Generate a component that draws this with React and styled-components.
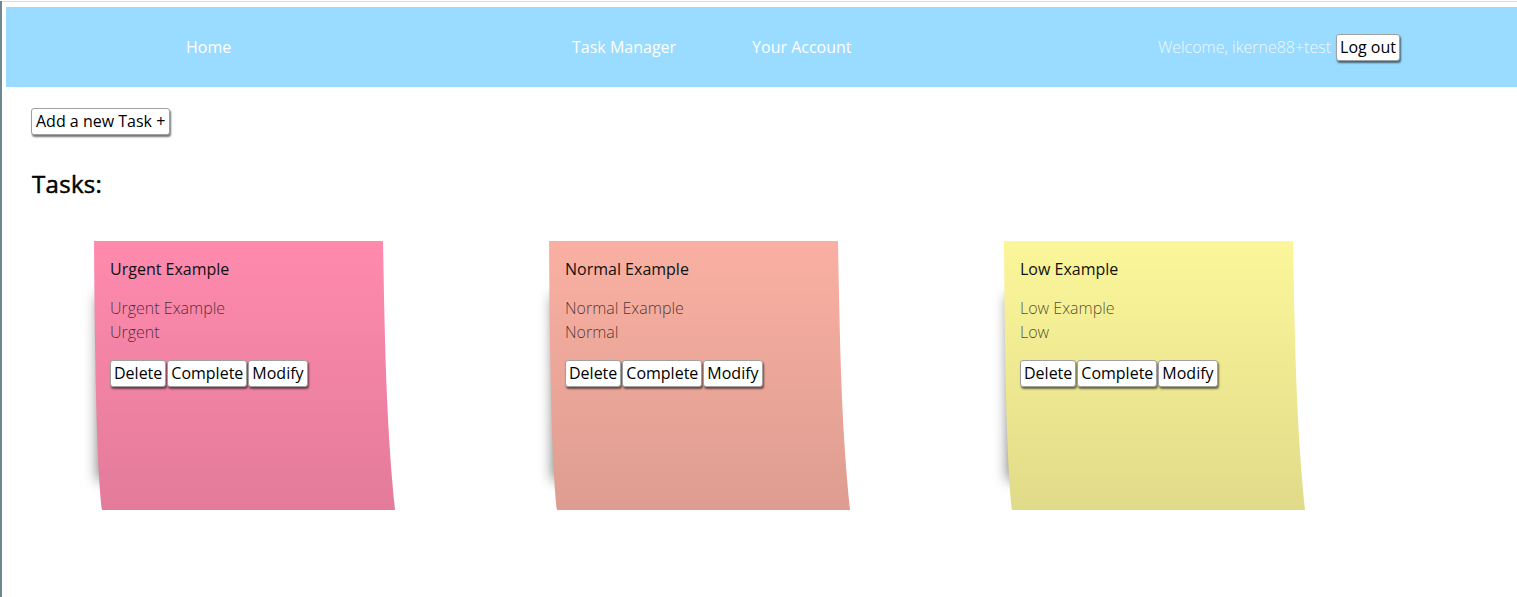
import React from "react";
import styled, { createGlobalStyle } from "styled-components";

const GlobalStyle = createGlobalStyle`
  html, body {
    margin: 0;
    padding: 0;
    background: #fff;
  }
  body {
    font-family: "Open Sans", "Liberation Sans", sans-serif;
    font-size: 16px;
    color: #000;
  }
`;

const tasks = [
  { title: "Urgent Example", description: "Urgent Example", priority: "Urgent", color: "#ff8aae" },
  { title: "Normal Example", description: "Normal Example", priority: "Normal", color: "#f9b0a2" },
  { title: "Low Example", description: "Low Example", priority: "Low", color: "#fcf69a" }
];

const App = () => {
  return (
    <Page>
      <GlobalStyle />
      <TopLine />
      <NavBar>
        <NavLeft>
          <NavLink>Home</NavLink>
        </NavLeft>
        <NavCenter>
          <NavLink>Task Manager</NavLink>
          <NavLink>Your Account</NavLink>
        </NavCenter>
        <NavRight>
          <Welcome>Welcome, ikerne88+test</Welcome>
          <Button>Log out</Button>
        </NavRight>
      </NavBar>

      <Main>
        <Button wide>Add a new Task +</Button>
        <Heading>Tasks:</Heading>
        <NoteRow>
          {tasks.map(task => (
            <NoteWrap key={task.title}>
              <NoteShadow />
              <Note color={task.color}>
                <NoteTitle>{task.title}</NoteTitle>
                <NoteText>
                  {task.description}
                  <br />
                  {task.priority}
                </NoteText>
                <NoteActions>
                  <Button>Delete</Button>
                  <Button>Complete</Button>
                  <Button>Modify</Button>
                </NoteActions>
              </Note>
            </NoteWrap>
          ))}
        </NoteRow>
      </Main>
    </Page>
  );
};

const Page = styled.div`
  min-height: 597px;
  border-left: 2px solid #71878f;
  box-sizing: border-box;
`;

const TopLine = styled.div`
  height: 1px;
  margin-top: 1px;
  background: #d9d9d9;
`;

const NavBar = styled.nav`
  display: grid;
  grid-template-columns: 560px 1fr auto;
  align-items: center;
  height: 80px;
  margin: 5px 0 0 4px;
  padding-right: 117px;
  background: #9adcff;
`;

const NavLeft = styled.div`
  padding-left: 180px;
`;

const NavCenter = styled.div`
  display: flex;
  gap: 76px;
  padding-left: 6px;
`;

const NavRight = styled.div`
  display: flex;
  align-items: center;
  gap: 5px;
`;

const NavLink = styled.a`
  color: #fff;
  font-size: 16px;
  cursor: pointer;
`;

const Welcome = styled.span`
  color: #eef8ff;
  font-weight: 300;
`;

const Button = styled.button`
  font-family: "Open Sans", "Liberation Sans", sans-serif;
  font-size: 16px;
  line-height: 22px;
  color: #000;
  background: #fff;
  border: 1px solid #a0a0a0;
  border-radius: 3px;
  padding: 1px ${props => (props.wide ? "4px" : "3px")} 2px;
  box-shadow: 1px 2px 2px rgba(0, 0, 0, 0.55);
  cursor: pointer;
`;

const Main = styled.main`
  padding: 21px 29px 0;
  display: flex;
  flex-direction: column;
  align-items: flex-start;
`;

const Heading = styled.h2`
  font-size: 24px;
  font-weight: 400;
  letter-spacing: 0.3px;
  -webkit-text-stroke: 0.5px #000;
  line-height: 32px;
  margin: 33px 0 0 1px;
`;

const NoteRow = styled.div`
  display: flex;
  gap: 154px;
  margin-top: 41px;
  padding-left: 63px;
`;

const NoteWrap = styled.div`
  position: relative;
  width: 301px;
  height: 269px;
`;

const NoteShadow = styled.div`
  position: absolute;
  left: 4px;
  top: 55px;
  bottom: 30px;
  width: 30px;
  background: rgba(0, 0, 0, 0.55);
  filter: blur(7px);
`;

const Note = styled.div`
  position: relative;
  box-sizing: border-box;
  height: 100%;
  padding: 16px 16px 0;
  background: linear-gradient(180deg, rgba(0, 0, 0, 0) 0%, rgba(0, 0, 0, 0.11) 100%),
    ${props => props.color};
  clip-path: path("M0 0 L289 0 C 291 120, 293 190, 301 269 L8 269 C 4 235, 1 160, 0 0 Z");
`;

const NoteTitle = styled.h3`
  font-size: 16px;
  font-weight: 400;
  line-height: 24px;
  margin: 0;
  color: #111;
`;

const NoteText = styled.p`
  font-size: 16px;
  font-weight: 300;
  line-height: 24px;
  margin: 15px 0 0;
  color: rgba(0, 0, 0, 0.7);
`;

const NoteActions = styled.div`
  display: flex;
  gap: 1px;
  margin-top: 16px;
`;

export default App;
